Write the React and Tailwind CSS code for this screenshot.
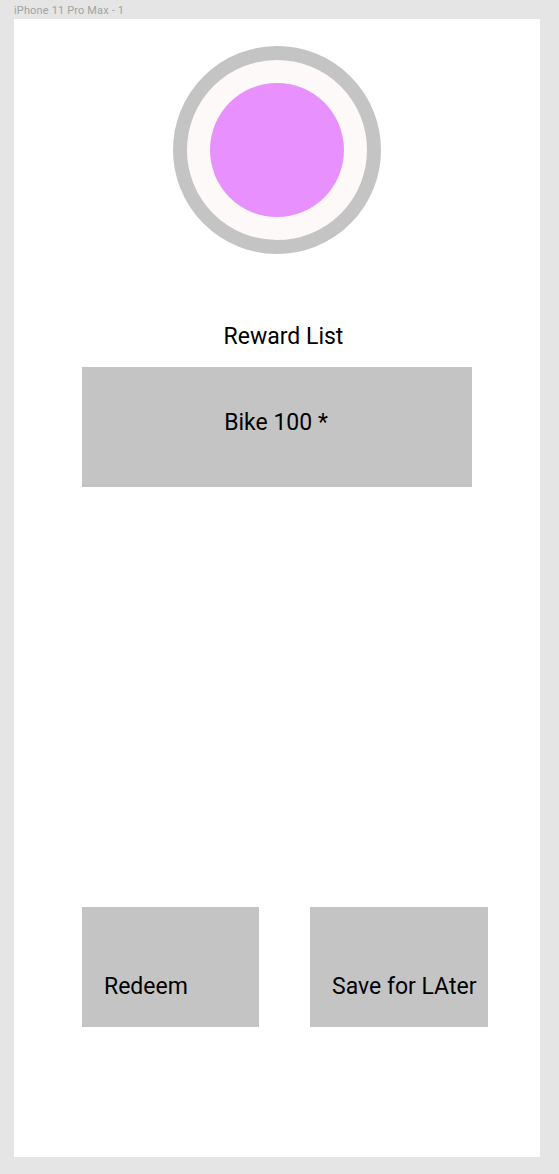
import React from 'react';

const Tile = ({ label, className = '' }) => (
  <div className={`h-[120px] bg-[#c4c4c4] ${className}`}>
    <span className="block text-[23px] leading-[26px] text-black">{label}</span>
  </div>
);

const App = () => {
  return (
    <div className="w-[559px] h-[1174px] bg-[#e5e5e5] pl-[14px] font-['Roboto','Liberation_Sans',sans-serif]">
      <div className="h-[19px] flex items-center text-[11px] tracking-[0.15px] text-[#a3a3a3] leading-none pt-[1px]">
        iPhone 11 Pro Max - 1
      </div>

      <div className="w-[526px] h-[1138px] bg-white flex flex-col items-center">
        {/* avatar ring */}
        <div className="mt-[27px] w-[208px] h-[208px] rounded-full border-[14px] border-[#c4c4c4] bg-[#fdf9f9] flex items-center justify-center">
          <div className="w-[134px] h-[134px] rounded-full bg-[#e890fd]" />
        </div>

        <h2 className="mt-[70px] ml-[13px] text-[23px] leading-[26px] text-black">Reward List</h2>

        <Tile label="Bike 100 *" className="mt-[17px] w-[390px] pt-[43px] pr-[2px] text-center" />

        <div className="mt-[420px] self-start ml-[68px] flex gap-[51px]">
          <Tile label="Redeem" className="w-[177px] pt-[67px] pl-[22px]" />
          <Tile label="Save for LAter" className="w-[178px] pt-[67px] pl-[22px]" />
        </div>
      </div>
    </div>
  );
};

export default App;
